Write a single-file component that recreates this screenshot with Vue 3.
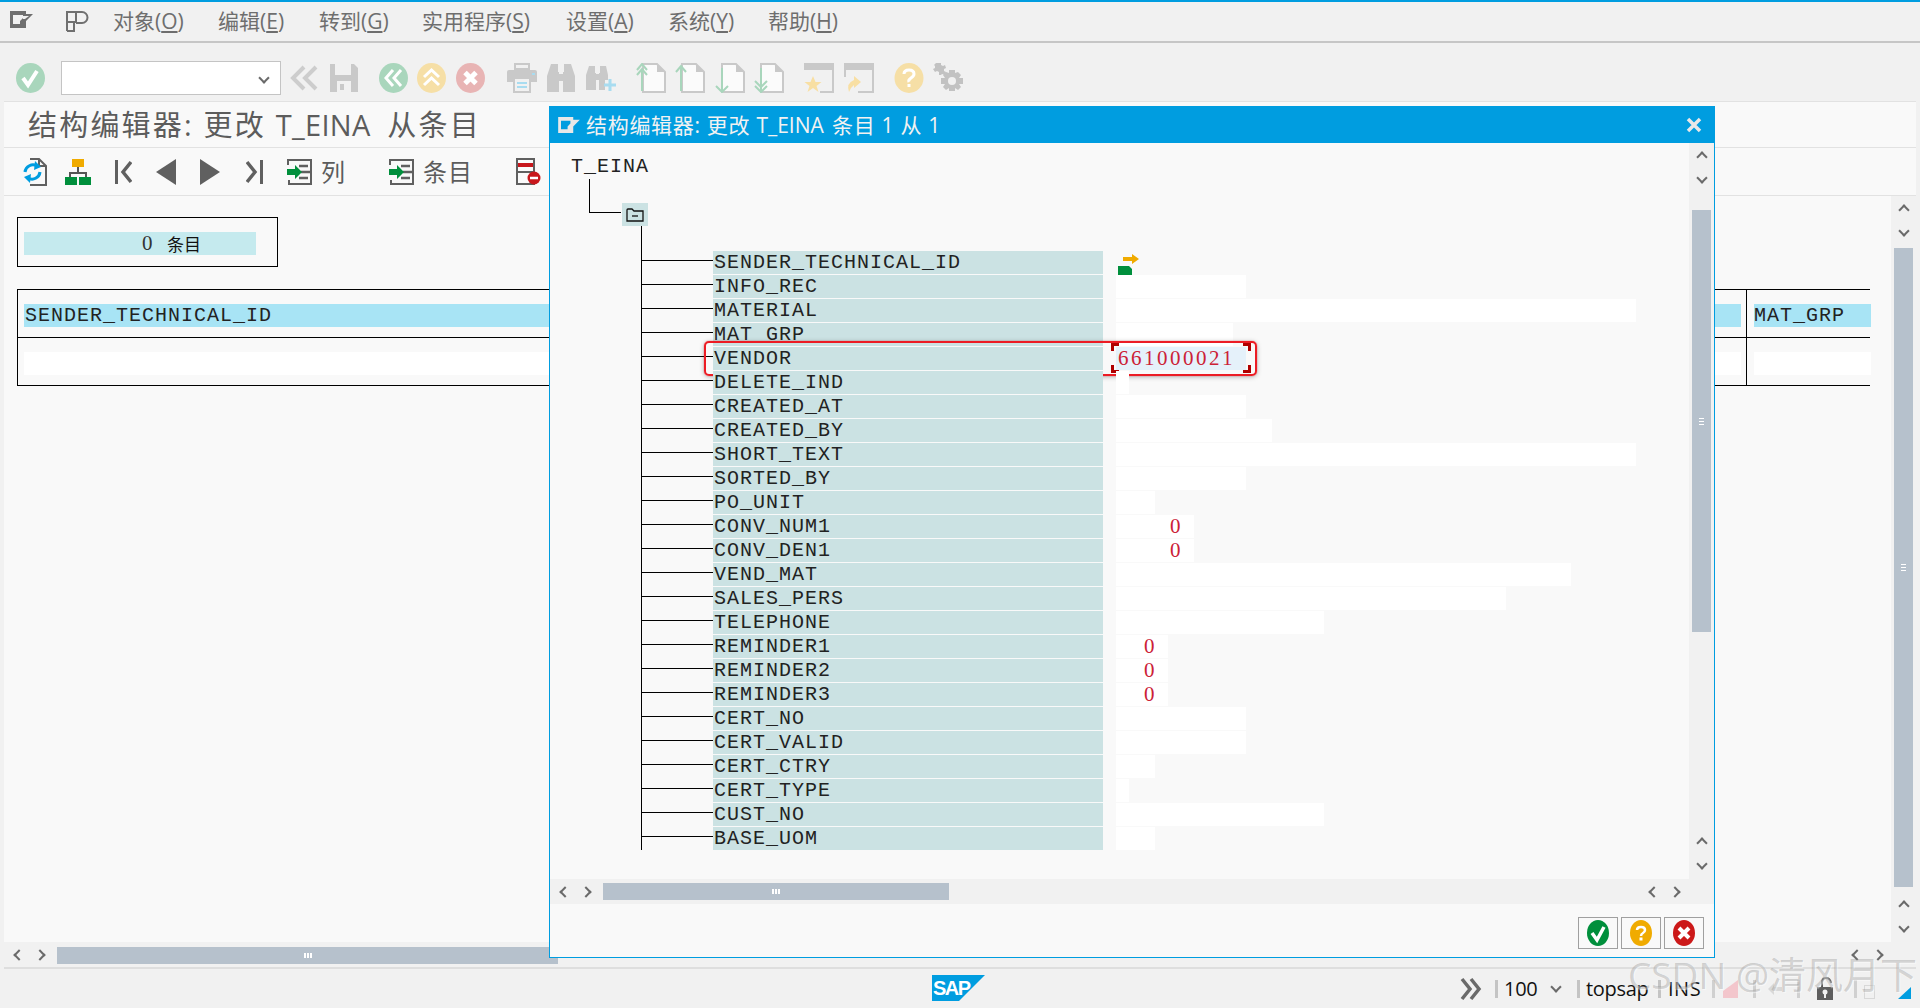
<script setup>
const menus = [
  { zh: '对象', key: 'O', cls: 'm1' },
  { zh: '编辑', key: 'E', cls: 'm2' },
  { zh: '转到', key: 'G', cls: 'm3' },
  { zh: '实用程序', key: 'S', cls: 'm4' },
  { zh: '设置', key: 'A', cls: 'm5' },
  { zh: '系统', key: 'Y', cls: 'm6' },
  { zh: '帮助', key: 'H', cls: 'm7' }
]
const fields = [
  { name: 'SENDER_TECHNICAL_ID', w: 0, icon: true },
  { name: 'INFO_REC', w: 130 },
  { name: 'MATERIAL', w: 520 },
  { name: 'MAT_GRP', w: 117 },
  { name: 'VENDOR', w: 130, value: '661000021', active: true },
  { name: 'DELETE_IND', w: 13 },
  { name: 'CREATED_AT', w: 130 },
  { name: 'CREATED_BY', w: 156 },
  { name: 'SHORT_TEXT', w: 520 },
  { name: 'SORTED_BY', w: 130 },
  { name: 'PO_UNIT', w: 39 },
  { name: 'CONV_NUM1', w: 78, value: '0', num: true },
  { name: 'CONV_DEN1', w: 78, value: '0', num: true },
  { name: 'VEND_MAT', w: 455 },
  { name: 'SALES_PERS', w: 390 },
  { name: 'TELEPHONE', w: 208 },
  { name: 'REMINDER1', w: 52, value: '0', num: true },
  { name: 'REMINDER2', w: 52, value: '0', num: true },
  { name: 'REMINDER3', w: 52, value: '0', num: true },
  { name: 'CERT_NO', w: 130 },
  { name: 'CERT_VALID', w: 130 },
  { name: 'CERT_CTRY', w: 39 },
  { name: 'CERT_TYPE', w: 13 },
  { name: 'CUST_NO', w: 208 },
  { name: 'BASE_UOM', w: 39 }
]
</script>

<template>
  <div class="page">
    <div class="accent"></div>

    <div class="menubar">
      <svg class="menu-ico" width="23" height="17" viewBox="0 0 23 17"><path d="M0 0h16v3h7l-7 7v7H0z" fill="#6f6f6f"/><path d="M3 4h10v3l-3 3v3H3z" fill="#f1f1f1"/><path d="M13 5h6l-4 3h-2z" fill="#f1f1f1"/></svg>
      <svg class="menu-ico2" width="23" height="21" viewBox="0 0 23 21" fill="none" stroke="#707070" stroke-width="2"><path d="M1 20V1h9v10H1M10 1h6a5 5 0 0 1 0 11h-6M8 12v8H1"/></svg>
      <span v-for="m in menus" :key="m.key" class="menu" :class="m.cls">{{ m.zh }}(<u>{{ m.key }}</u>)</span>
    </div>

    <div class="toolbar">
      <svg width="29" height="30" viewBox="0 0 29 30"><ellipse cx="14.5" cy="15" rx="14.5" ry="15" fill="#a9d6bc"/><path d="M7 15l5 7 9-14" fill="none" stroke="#fff" stroke-width="4"/></svg>
      <div class="combo"><i class="chev down small"></i></div>
      <div class="tgroup g-a">
        <svg width="30" height="30" viewBox="0 0 30 30" fill="none" stroke="#cdcdcd" stroke-width="4"><path d="M15 4L4 15l11 11M27 4L16 15l11 11"/></svg>
        <svg width="30" height="30" viewBox="0 0 30 30"><path d="M1 1h24l4 4v24H1z" fill="#c9c9c9"/><path d="M6 1h16v11H6z" fill="#f1f1f1"/><path d="M8 18h14v11H8z" fill="#f1f1f1"/><path d="M11 21h4v6h-4z" fill="#c9c9c9"/></svg>
      </div>
      <div class="tgroup g-b">
        <svg width="29" height="30" viewBox="0 0 29 30"><ellipse cx="14.5" cy="15" rx="14.5" ry="15" fill="#a9d6bc"/><path d="M14 7l-7 8 7 8M22 7l-7 8 7 8" fill="none" stroke="#fff" stroke-width="3"/></svg>
        <svg width="29" height="30" viewBox="0 0 29 30"><ellipse cx="14.5" cy="15" rx="14.5" ry="15" fill="#f6dfa6"/><path d="M7 14l7.500-7 7.500 7M7 22l7.500-7 7.500 7" fill="none" stroke="#fff" stroke-width="3"/></svg>
        <svg width="29" height="30" viewBox="0 0 29 30"><ellipse cx="14.5" cy="15" rx="14.5" ry="15" fill="#e8b4b4"/><path d="M9 9.500l11 11M20 9.500l-11 11" fill="none" stroke="#fff" stroke-width="5"/></svg>
      </div>
      <div class="tgroup g-c">
        <svg width="30" height="30" viewBox="0 0 30 30"><path d="M8 1h14v5H8z" fill="none" stroke="#c9c9c9" stroke-width="2"/><path d="M0 9q0-2 2-2h26q2 0 2 2v10H0z" fill="#c9c9c9"/><path d="M7 15h16v14H7z" fill="#f1f1f1" stroke="#c9c9c9" stroke-width="2"/><path d="M10 20h10M10 24h10" stroke="#a8dcf0" stroke-width="2"/><path d="M25 10h3v2h-3z" fill="#a8dcf0"/></svg>
        <svg width="30" height="30" viewBox="0 0 30 30" fill="#c9c9c9"><path d="M5 1h7v8h1v20H1V13zM18 1h7l4 12v16H17V9h1z"/><path d="M12 11h6v7h-6z"/></svg>
        <svg width="30" height="30" viewBox="0 0 30 30"><path d="M3 3h6v7h1v17H0V12zM14 3h6l2 9v5h-3v10h-6V10h1z" fill="#c9c9c9"/><path d="M9 11h5v6H9z" fill="#c9c9c9"/><path d="M24 16v12M18 22h12" stroke="#a8dcf0" stroke-width="3"/></svg>
      </div>
      <div class="tgroup g-d">
        <svg width="30" height="30" viewBox="0 0 30 30"><path d="M7 1h14l8 8v20H7z" fill="#fbfbfb" stroke="#c9c9c9" stroke-width="2"/><path d="M21 1v8h8" fill="#c9c9c9"/><path d="M6 28V7M1 12l5-6 5 6M1 7l5-6 5 6" fill="none" stroke="#a9d6bc" stroke-width="2"/></svg>
        <svg width="30" height="30" viewBox="0 0 30 30"><path d="M7 1h14l8 8v20H7z" fill="#fbfbfb" stroke="#c9c9c9" stroke-width="2"/><path d="M21 1v8h8" fill="#c9c9c9"/><path d="M6 28V3M1 9l5-6 5 6" fill="none" stroke="#a9d6bc" stroke-width="2"/></svg>
        <svg width="30" height="30" viewBox="0 0 30 30"><path d="M7 1h14l8 8v20H7z" fill="#fbfbfb" stroke="#c9c9c9" stroke-width="2"/><path d="M21 1v8h8" fill="#c9c9c9"/><path d="M7 5v24M1 23l6 6 6-6" fill="none" stroke="#a9d6bc" stroke-width="2"/></svg>
        <svg width="30" height="30" viewBox="0 0 30 30"><path d="M7 1h14l8 8v20H7z" fill="#fbfbfb" stroke="#c9c9c9" stroke-width="2"/><path d="M21 1v8h8" fill="#c9c9c9"/><path d="M7 5v24M1 23l6 6 6-6M1 18l6 6 6-6" fill="none" stroke="#a9d6bc" stroke-width="2"/></svg>
      </div>
      <div class="tgroup g-e">
        <svg width="30" height="30" viewBox="0 0 30 30"><path d="M1 7V1h28v28H16" fill="none" stroke="#c9c9c9" stroke-width="2"/><path d="M1 1h28v6H1z" fill="#c9c9c9"/><path d="M9 13l2.500 6h6l-5 4 2 6-5.500-4-5.500 4 2-6-5-4h6z" fill="#f8dfa3"/></svg>
        <svg width="30" height="30" viewBox="0 0 30 30"><path d="M1 14V1h28v28H14" fill="none" stroke="#c9c9c9" stroke-width="2"/><path d="M1 1h28v6H1z" fill="#c9c9c9"/><path d="M5 29q-3-9 5-12v-4l7 6-7 6v-3q-3 2-5 7z" fill="#f8dfa3"/></svg>
      </div>
      <div class="tgroup g-e">
        <svg width="30" height="30" viewBox="0 0 30 30"><ellipse cx="15" cy="15" rx="14.500" ry="15" fill="#f6dfa6"/><path d="M10 11q0-4 5-4t5 4q0 2-3 4t-2 4" fill="none" stroke="#fff" stroke-width="3"/><path d="M13.500 21h3v3h-3z" fill="#fff"/></svg>
        <svg width="30" height="30" viewBox="0 0 30 30"><g fill="#c2c2c2"><path d="M5 0h3v2l2 1 2-1 1 3-2 1v2l2 1-1 3-3-1-1 1H6V9L4 8 2 9 0 6l2-1V3L1 2l2-2z"/><path d="M16 7h6v3l3-1 3 3-2 3h4v6h-4l2 3-3 3-3-2v3h-6v-3l-3 2-3-3 2-3H8v-6h4l-2-3 3-3 3 1z"/></g><circle cx="19" cy="18" r="4" fill="#f1f1f1"/></svg>
      </div>
    </div>

    <div class="work">
      <div class="title-row"><h1 class="page-title">结构编辑器: 更改 <span class="latin">T_EINA</span> 从条目</h1></div>
      <div class="app-toolbar">
        <svg class="a1" width="25" height="28" viewBox="0 0 25 28"><path d="M8 1h9l7 7v19H8" fill="none" stroke="#606060" stroke-width="2"/><path d="M17 1v7h7" fill="none" stroke="#606060" stroke-width="2"/><path d="M3 14a8 8 0 0 1 12-6" fill="none" stroke="#009de0" stroke-width="3"/><path d="M13 3l6 6-7 3z" fill="#009de0"/><path d="M18 14a8 8 0 0 1-12 6" fill="none" stroke="#009de0" stroke-width="3"/><path d="M8 25l-6-6 7-3z" fill="#009de0"/></svg>
        <svg class="a2" width="26" height="26" viewBox="0 0 26 26"><path d="M7 0h12v8H7z" fill="#f0ab00"/><path d="M13 8v6M5 18v-4h16v4" fill="none" stroke="#555" stroke-width="2"/><path d="M0 18h12v8H0zM14 18h12v8H14z" fill="#008f3c"/></svg>
        <svg class="a3" width="18" height="24" viewBox="0 0 18 24"><path d="M1 0h3v24H1z" fill="#606060"/><path d="M17 2L9 12l8 10" fill="none" stroke="#606060" stroke-width="3.500"/></svg>
        <svg class="a4" width="20" height="26" viewBox="0 0 20 26"><path d="M20 0v26L0 13z" fill="#606060"/></svg>
        <svg class="a5" width="20" height="26" viewBox="0 0 20 26"><path d="M0 0v26l20-13z" fill="#606060"/></svg>
        <svg class="a6" width="18" height="24" viewBox="0 0 18 24"><path d="M14 0h3v24h-3z" fill="#606060"/><path d="M1 2l8 10-8 10" fill="none" stroke="#606060" stroke-width="3.500"/></svg>
        <svg class="a7" width="25" height="26" viewBox="0 0 25 26"><path d="M1 6V1h23v24H2v-4M1 9" fill="none" stroke="#606060" stroke-width="2"/><path d="M12 7h9M14 13h10M12 19h9" stroke="#606060" stroke-width="2.500"/><path d="M0 10h8V6l7 7-7 7v-4H0z" fill="#008f3c"/></svg>
        <span class="tool-text t1">列</span>
        <svg class="a8" width="25" height="26" viewBox="0 0 25 26"><path d="M1 6V1h23v24H2v-4M1 9" fill="none" stroke="#606060" stroke-width="2"/><path d="M12 7h9M14 13h10M12 19h9" stroke="#606060" stroke-width="2.500"/><path d="M0 10h8V6l7 7-7 7v-4H0z" fill="#008f3c"/></svg>
        <span class="tool-text t1">条目</span>
        <svg class="a9" width="25" height="27" viewBox="0 0 25 27"><path d="M1 1h17v25H1z" fill="#fafafa" stroke="#606060" stroke-width="2"/><path d="M2 5h15v4H2z" fill="#c8171c"/><path d="M2 14h15" stroke="#606060" stroke-width="2"/><circle cx="18" cy="20" r="6.500" fill="#c8171c"/><path d="M14 20h8" stroke="#fff" stroke-width="2.500"/></svg>
      </div>

      <div class="body">
        <div class="content">
          <div class="count-box"><div class="count-bar"><span class="mono digits dark">0</span><span class="count-cjk">条目</span></div></div>
          <div class="table">
            <div class="table-row">
              <div class="cell-main"><div class="bar head mono">SENDER_TECHNICAL_ID</div></div>
              <div class="cell-last"><div class="bar head flush mono">MAT_GRP</div></div>
            </div>
            <div class="table-row last-row">
              <div class="cell-main"><div class="bar blank"></div></div>
              <div class="cell-last"><div class="bar blank"></div></div>
            </div>
          </div>
        </div>
        <div class="vscroll main-v">
          <i class="chev up"></i><i class="chev down"></i>
          <div class="v-thumb main-thumb"><b class="grip-v"></b></div>
          <i class="chev up"></i><i class="chev down"></i>
        </div>
      </div>

      <div class="hscroll main-h">
        <i class="chev left"></i><i class="chev right"></i>
        <div class="h-thumb main-hthumb"><b class="grip-h"></b></div>
        <i class="chev left far"></i><i class="chev right"></i>
      </div>
    </div>

    <div class="statusbar">
      <svg class="sap" width="53" height="26" viewBox="0 0 53 26"><path d="M0 0h53L27 26H0z" fill="#009de0"/><text x="1" y="19.500" class="sap-text">SAP</text></svg>
      <div class="status-right">
        <svg width="22" height="24" viewBox="0 0 22 24" fill="none" stroke="#6a6a6a" stroke-width="3.500"><path d="M2 2l8 10-8 10M11 2l8 10-8 10"/></svg>
        <i class="sep s1"></i>
        <span class="st-text st-100">100</span>
        <i class="chev down small st-chev"></i>
        <i class="sep s2"></i>
        <span class="st-text st-sys">topsap</span>
        <i class="sep s3"></i>
        <span class="st-text st-ins">INS</span>
        <i class="sep s4"></i>
        <svg class="st-mark" width="15" height="18" viewBox="0 0 15 18"><path d="M0 18V11L15 0v18z" fill="#f3c6cc"/></svg>
        <i class="sep s5"></i>
        <svg class="st-arrow" width="14" height="12" viewBox="0 0 14 12"><path d="M0 6l6-6v4h8v4H6v4z" fill="#d8d8d8"/></svg>
        <i class="sep s6"></i>
        <svg class="st-lock" width="16" height="24" viewBox="0 0 16 24"><path d="M5 12V7q0-5 4-5t5 5" fill="none" stroke="#555" stroke-width="2"/><path d="M0 11h16v13H0z" fill="#5e5e5e"/><circle cx="8" cy="16" r="2.500" fill="#f1f1f1"/><path d="M7 17h2v5H7z" fill="#f1f1f1"/></svg>
        <i class="sep s7"></i>
        <div class="st-box"></div>
        <svg class="st-corner" width="13" height="12" viewBox="0 0 13 12"><path d="M13 0v12H0z" fill="#009de0"/></svg>
      </div>
    </div>

    <section class="dialog">
      <header class="dlg-title">
        <svg width="22" height="16" viewBox="0 0 23 17"><path d="M0 0h16v3h7l-7 7v7H0z" fill="#e8e8e8"/><path d="M3 4h10v3l-3 3v3H3z" fill="#009de0"/></svg>
        <span class="dlg-title-text">结构编辑器: 更改 <span class="latin">T_EINA</span> 条目 1 从 1</span>
        <svg class="dlg-close" width="16" height="16" viewBox="0 0 16 16"><path d="M2 2l12 12M14 2L2 14" stroke="#e8e8e8" stroke-width="3.500"/></svg>
      </header>

      <div class="dlg-main">
        <div class="tree">
          <div class="mono tree-root">T_EINA</div>
          <div class="tree-node">
            <div class="connector"></div>
            <div class="folder">
              <svg width="18" height="14" viewBox="0 0 18 14" fill="none" stroke="#111" stroke-width="1.300"><path d="M1 13V2q0-1 1-1h4l2 2h9v10z"/><path d="M6 8h6"/></svg>
            </div>
          </div>
          <div class="rows">
            <div v-for="f in fields" :key="f.name" class="row">
              <div class="branch"></div>
              <div class="label mono">{{ f.name }}</div>
              <svg v-if="f.icon" class="row-ico" width="22" height="21" viewBox="0 0 22 21"><path d="M6 3h9V0l7 5-7 5V7H6z" fill="#f0ab00"/><path d="M1 12h11l3 3v6H1z" fill="#008f3c"/></svg>
              <div v-else class="value" :class="{ num: f.num, active: f.active }" :style="{ width: f.w + 'px' }">
                <span v-if="f.value" class="mono digits val-text">{{ f.value }}</span>
                <template v-if="f.active">
                  <i class="corner tl"></i><i class="corner tr"></i><i class="corner bl"></i><i class="corner br"></i>
                </template>
              </div>
              <div v-if="f.active" class="highlight"></div>
            </div>
          </div>
        </div>
        <div class="vscroll dlg-v">
          <i class="chev up"></i><i class="chev down"></i>
          <div class="v-thumb dlg-thumb"><b class="grip-v"></b></div>
          <i class="chev up"></i><i class="chev down"></i>
        </div>
      </div>

      <div class="hscroll dlg-h">
        <i class="chev left"></i><i class="chev right"></i>
        <div class="h-thumb dlg-hthumb"><b class="grip-h"></b></div>
        <i class="chev left far2"></i><i class="chev right"></i>
      </div>

      <footer class="dlg-foot">
        <button class="btn"><svg width="22" height="26" viewBox="0 0 22 26"><ellipse cx="11" cy="13" rx="11" ry="13" fill="#008f3c"/><path d="M5 13l5 7 7-13" fill="none" stroke="#fff" stroke-width="3.500"/></svg></button>
        <button class="btn"><svg width="22" height="26" viewBox="0 0 22 26"><ellipse cx="11" cy="13" rx="11" ry="13" fill="#f0ab00"/><path d="M7 10q0-3 4-3t4 3q0 2-2 3t-2 3" fill="none" stroke="#fff" stroke-width="2.500"/><path d="M9.500 17.500h3v3h-3z" fill="#fff"/></svg></button>
        <button class="btn"><svg width="22" height="26" viewBox="0 0 22 26"><ellipse cx="11" cy="13" rx="11" ry="13" fill="#cc1919"/><path d="M6 8l10 10M16 8L6 18" fill="none" stroke="#fff" stroke-width="4"/></svg></button>
      </footer>
    </section>

    <div class="watermark">CSDN @清风月下</div>
  </div>
</template>

<style>
html, body { margin: 0; padding: 0; background: #f1f1f1; }
</style>

<style scoped>
.page {
  position: relative;
  width: 1920px;
  height: 1008px;
  overflow: hidden;
  display: flex;
  flex-direction: column;
  background: #f1f1f1;
  font-family: "Open Sans", "Noto Sans CJK SC", sans-serif;
  color: #606060;
}
.mono {
  font-family: "Liberation Mono", "Noto Sans CJK SC", monospace;
  font-size: 20px;
  letter-spacing: 1px;
  color: #222;
  line-height: 23px;
  white-space: pre;
}
.mono.digits {
  font-family: "Liberation Serif", serif;
  font-size: 21px;
  letter-spacing: 2.500px;
}
.mono.dark { color: #333; }
.accent { height: 2px; background: #009de0; flex: none; }

.menubar {
  flex: none;
  height: 39px;
  border-bottom: 2px solid #c6c6c6;
  display: flex;
  align-items: center;
  padding-left: 10px;
  font-size: 21px;
  color: #6e6e6e;
}
.menu-ico { margin-top: -5px; }
.menu-ico2 { margin-left: 33px; margin-top: -1px; }
.menu { white-space: nowrap; line-height: 26px; margin-top: -2px; }
.menu u { text-underline-offset: 2px; }
.m1 { margin-left: 24px; width: 105px; }
.m2 { width: 101px; }
.m3 { width: 103px; }
.m4 { width: 144px; }
.m5 { width: 102px; }
.m6 { width: 100px; }

.toolbar {
  flex: none;
  height: 58px;
  padding: 11px 0 0 16px;
  box-sizing: border-box;
  display: flex;
  align-items: center;
}
.combo {
  width: 220px;
  height: 34px;
  margin-left: 16px;
  background: #fff;
  border: 1px solid #c4c4c4;
  box-sizing: border-box;
  display: flex;
  align-items: center;
  justify-content: flex-end;
  padding-right: 12px;
}
.tgroup { display: flex; align-items: center; gap: 9.5px; }
.g-a { margin-left: 8px; }
.g-b { margin-left: 20px; }
.g-c { margin-left: 22px; }
.g-d { margin-left: 20px; }
.g-e { margin-left: 20px; }

.chev {
  display: block;
  width: 8px;
  height: 8px;
  border-left: 2px solid #6a6a6a;
  border-top: 2px solid #6a6a6a;
  box-sizing: border-box;
  flex: none;
}
.chev.up { transform: rotate(45deg); }
.chev.down { transform: rotate(225deg); }
.chev.left { transform: rotate(-45deg); }
.chev.right { transform: rotate(135deg); }

.work {
  flex: none;
  height: 868px;
  margin-left: 4px;
  width: 1912px;
  border-top: 1px solid #e2e2e2;
  border-bottom: 2px solid #dedede;
  box-sizing: border-box;
  display: flex;
  flex-direction: column;
  background: #f9f9f9;
}
.title-row {
  flex: none;
  height: 45px;
  border-bottom: 1px solid #e2e2e2;
  display: flex;
  align-items: center;
  padding-left: 24px;
}
.page-title {
  margin: 0;
  font-size: 29px;
  font-weight: 400;
  letter-spacing: 2.200px;
  color: #5c5c5c;
  line-height: 40px;
  white-space: nowrap;
}
.page-title .latin { letter-spacing: 0.300px; margin-right: 7px; }
.app-toolbar {
  flex: none;
  height: 47px;
  border-bottom: 1px solid #e2e2e2;
  display: flex;
  align-items: center;
  padding-left: 18px;
}
.a2 { margin-left: 18px; }
.a3 { margin-left: 23px; }
.a4 { margin-left: 24px; }
.a5 { margin-left: 24px; }
.a6 { margin-left: 26px; }
.a7 { margin-left: 23px; }
.a8 { margin-left: 43px; }
.a9 { margin-left: 43px; }
.tool-text { font-size: 24px; letter-spacing: 1px; color: #5c5c5c; line-height: 30px; margin-left: 9px; }

.body { flex: 1; min-height: 0; display: flex; }
.content { flex: 1; min-width: 0; padding: 21px 0 0 13px; }
.count-box {
  width: 261px;
  height: 50px;
  box-sizing: border-box;
  border: 1px solid #000;
  padding: 14px 0 0 6px;
}
.count-bar {
  width: 232px;
  height: 23px;
  background: #c5eaee;
  padding-left: 118px;
  box-sizing: border-box;
  display: flex;
  align-items: center;
}
.count-cjk { font-family: "Noto Sans CJK SC", sans-serif; font-size: 17px; letter-spacing: 0; color: #111; line-height: 23px; margin-left: 12px; }
.table { width: 1852px; margin-top: 22px; border-left: 1px solid #000; }
.table-row { display: flex; height: 48px; box-sizing: border-box; border-top: 1px solid #000; }
.last-row { height: 49px; border-bottom: 1px solid #000; }
.cell-main { flex: 1; padding: 14px 5px 0 6px; }
.cell-last { width: 125px; box-sizing: border-box; border-left: 1px solid #000; padding: 14px 0 0 7px; margin-right: -1px; }
.bar { height: 23px; }
.head { background: #a8e4f5; padding-left: 1px; }
.head.flush { padding-left: 0; }
.blank { background: #fff; }

.vscroll {
  flex: none;
  width: 25px;
  background: #f1f1f1;
  display: flex;
  flex-direction: column;
  align-items: center;
  box-sizing: border-box;
  padding-top: 10px;
}
.vscroll .chev.down { margin-top: 13px; }
.v-thumb {
  width: 19px;
  background: #b6c1cc;
  display: flex;
  align-items: center;
  justify-content: center;
}
.main-thumb { height: 639px; margin: 13px 0 15px; }
.dlg-thumb { height: 422px; margin: 28px 0 207px; }
.grip-v { display: block; width: 5px; height: 7px; background: repeating-linear-gradient(#fff 0 1px, transparent 1px 3px); }
.grip-h { display: block; width: 8px; height: 5px; background: repeating-linear-gradient(90deg, #fff 0 2px, transparent 2px 3px); }

.hscroll {
  flex: none;
  height: 25px;
  display: flex;
  align-items: center;
  background: #f1f1f1;
  box-sizing: border-box;
  padding-left: 11px;
}
.hscroll .chev.right { margin-left: 13px; }
.h-thumb {
  height: 17px;
  background: #b6c1cc;
  display: flex;
  align-items: center;
  justify-content: center;
  margin-left: 13px;
}
.main-h { padding-top: 1px; }
.main-hthumb { width: 501px; }
.far { margin-left: 1295px; }
.dlg-hthumb { width: 346px; }
.far2 { margin-left: 701px; }

.statusbar {
  flex: 1;
  min-height: 0;
  display: flex;
  align-items: center;
  padding-left: 932px;
}
.sap { margin-top: -2px; }
.sap-text { font-family: "Liberation Sans", sans-serif; font-size: 20px; font-weight: 700; fill: #fff; letter-spacing: -1.500px; }
.status-right {
  margin-left: 475px;
  display: flex;
  align-items: center;
  height: 100%;
  width: 452px;
}
.sep { display: block; width: 3px; height: 18px; background: #c4c4c4; flex: none; }
.s1 { margin-left: 13px; }
.st-text { font-family: "Open Sans", sans-serif; font-size: 20px; color: #111; letter-spacing: -0.300px; line-height: 24px; white-space: nowrap; }
.st-100 { margin-left: 6px; width: 33px; }
.st-chev { margin-left: 15px; margin-top: -3px; }
.s2 { margin-left: 17px; }
.st-sys { margin-left: 6px; width: 62px; }
.s3 { margin-left: 10px; }
.st-ins { margin-left: 7px; width: 34px; letter-spacing: 0.500px; }
.s4 { margin-left: 10px; background: #d0d0d0; }
.st-mark { margin-left: 8px; }
.s5 { margin-left: 15px; background: #d0d0d0; }
.st-arrow { margin-left: 12px; }
.s6 { margin-left: 15px; background: #d0d0d0; }
.st-lock { margin-left: 17px; margin-top: -2px; }
.s7 { margin-left: 21px; background: #d0d0d0; }
.st-box { width: 9px; height: 12px; border: 1px solid #d8d8d8; margin-left: 7px; margin-top: 6px; }
.st-corner { margin-left: 23px; margin-top: 8px; }

.dialog {
  position: absolute;
  left: 549px;
  top: 106px;
  width: 1166px;
  height: 852px;
  box-sizing: border-box;
  border: 1px solid #009de0;
  border-top: 0;
  background: #f9f9f9;
  display: flex;
  flex-direction: column;
}
.dlg-title {
  flex: none;
  height: 37px;
  margin: 0 -1px;
  background: #009de0;
  display: flex;
  align-items: center;
  padding-left: 9px;
  position: relative;
}
.dlg-title-text { margin-left: 6px; font-size: 21px; color: #f2f2f2; white-space: nowrap; letter-spacing: 0.700px; line-height: 28px; }
.dlg-title-text .latin { letter-spacing: 0; margin-right: 2px; }
.dlg-close { margin-left: auto; margin-right: 13px; }

.dlg-main { flex: none; height: 736px; display: flex; }
.tree { flex: 1; min-width: 0; padding: 12px 0 0 21px; }
.tree-root { line-height: 24px; }
.tree-node { display: flex; margin-left: 18px; height: 47px; }
.connector {
  width: 32px;
  height: 34px;
  box-sizing: border-box;
  border-left: 1px solid #000;
  border-bottom: 1px solid #000;
  flex: none;
}
.folder {
  width: 26px;
  height: 23px;
  margin: 24px 0 0 1px;
  background: #cbe2e3;
  display: flex;
  align-items: center;
  justify-content: center;
}
.rows {
  margin-left: 70px;
  padding-top: 25px;
  border-left: 1px solid #000;
  display: flex;
  flex-direction: column;
  gap: 1px;
}
.row { display: flex; height: 23px; position: relative; }
.branch { width: 71px; height: 1px; background: #000; margin-top: 9px; flex: none; }
.label { width: 390px; background: #cbe2e3; flex: none; padding-left: 1px; box-sizing: border-box; }
.value {
  position: relative;
  margin-left: 13px;
  background: #fff;
  padding-left: 2px;
  box-sizing: border-box;
  height: 23px;
}
.mono.val-text { color: #cc2136; display: block; }
.value.num { text-align: right; padding: 0 11px 0 0; }
.value.active { background: #e5f1fa; }
.row-ico { margin: 3px 0 0 14px; }
.corner { position: absolute; width: 8px; height: 8px; border: 0 solid #b00000; box-sizing: border-box; }
.tl { left: -5px; top: -4px; border-width: 3px 0 0 3px; }
.tr { right: -5px; top: -4px; border-width: 3px 3px 0 0; }
.bl { left: -5px; bottom: -3px; border-width: 0 0 3px 3px; }
.br { right: -5px; bottom: -3px; border-width: 0 3px 3px 0; }
.highlight {
  position: absolute;
  left: 62px;
  top: -6px;
  width: 553px;
  height: 35px;
  box-sizing: border-box;
  border: 2px solid #ec1c24;
  border-radius: 5px;
  box-shadow: 0 0 1px #ec1c24, 0 1px 5px rgba(0, 0, 0, 0.28);
  pointer-events: none;
}

.dlg-foot {
  flex: 1;
  display: flex;
  justify-content: flex-end;
  gap: 3px;
  padding: 13px 10px 0 0;
  box-sizing: border-box;
}
.btn {
  width: 40px;
  height: 32px;
  padding: 0;
  box-sizing: border-box;
  border: 1px solid #a0a0a0;
  background: #f9f9f9;
  display: flex;
  align-items: center;
  justify-content: center;
}

.watermark {
  position: absolute;
  left: 1628px;
  top: 953px;
  font-family: "Open Sans", "Noto Sans CJK SC", sans-serif;
  font-size: 37px;
  line-height: 44px;
  color: rgba(120, 120, 120, 0.3);
  text-shadow: 1px 1px 1px rgba(255, 255, 255, 0.5);
  white-space: nowrap;
  pointer-events: none;
}
</style>
